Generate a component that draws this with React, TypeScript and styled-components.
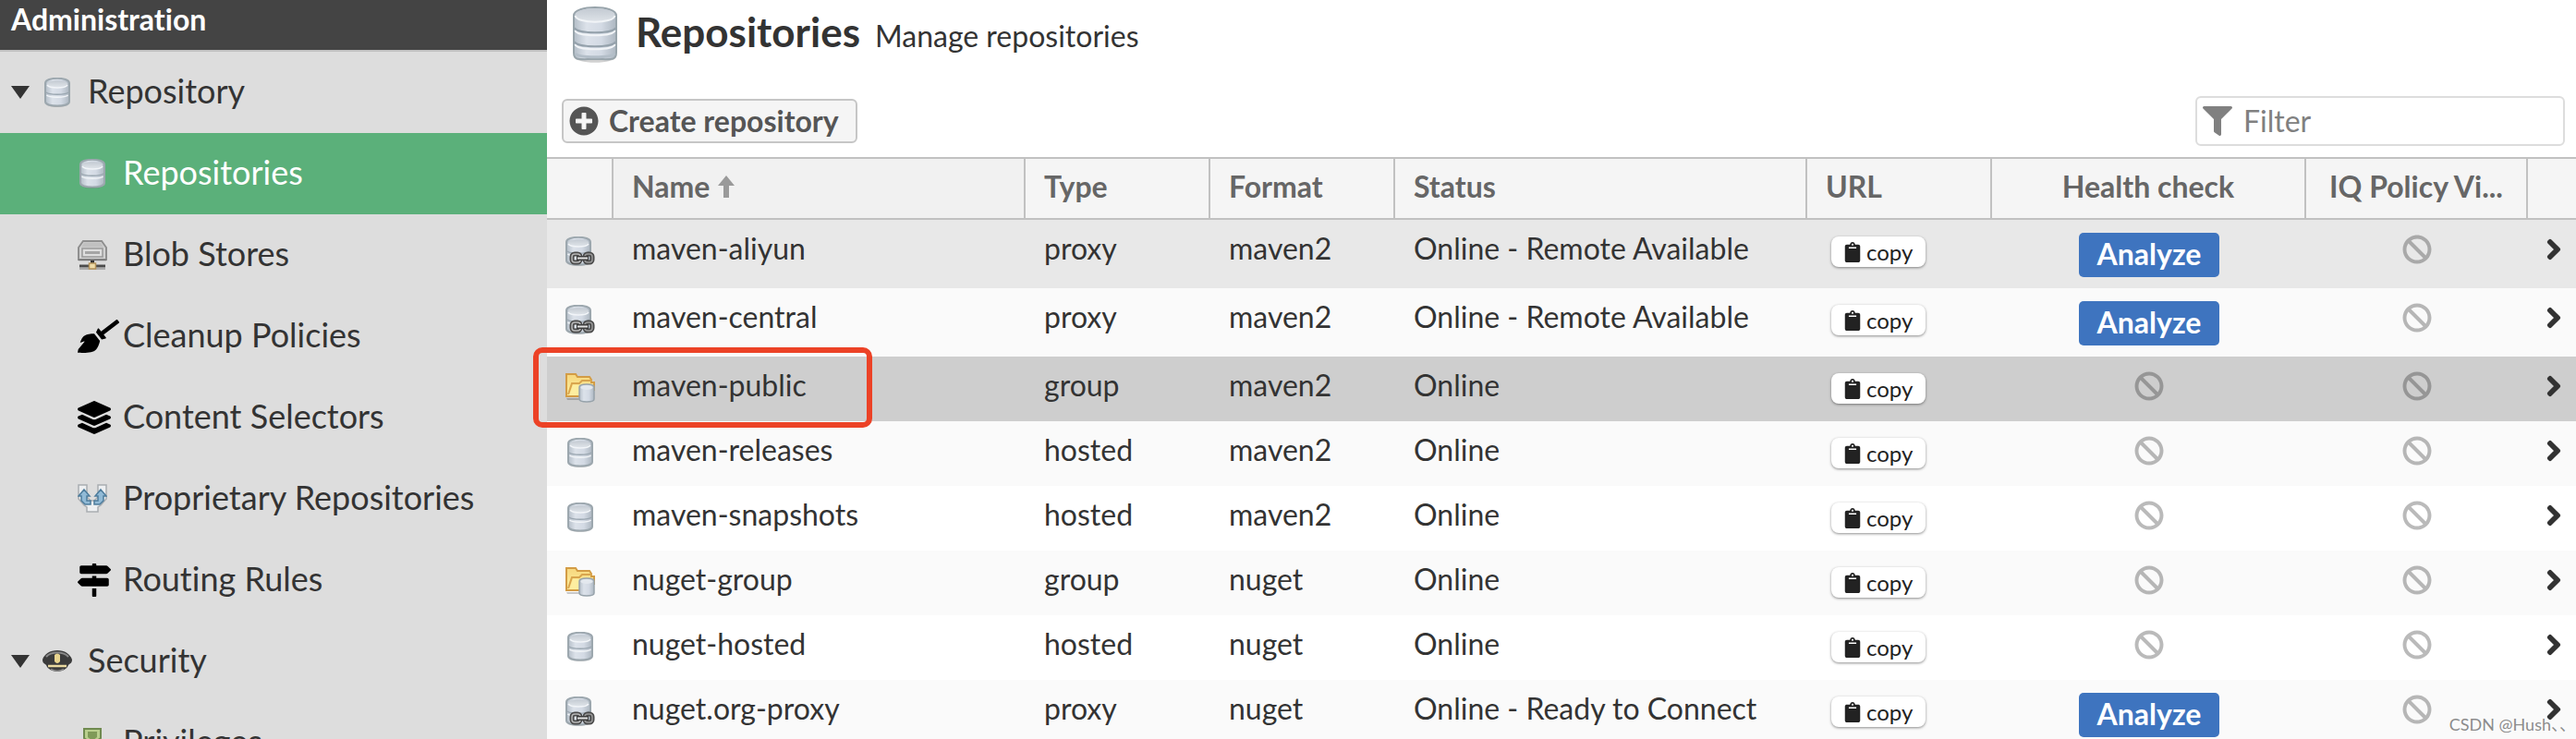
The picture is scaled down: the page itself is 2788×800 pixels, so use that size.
import React from "react";
import styled, { createGlobalStyle } from "styled-components";
import {
  FaBan,
  FaBroom,
  FaChevronRight,
  FaClipboard,
  FaFilter,
  FaLayerGroup,
  FaMapSigns,
  FaPlusCircle,
} from "react-icons/fa";

const GlobalStyle = createGlobalStyle`
  *, *::before, *::after { box-sizing: border-box; }
  body {
    margin: 0;
    background: #fff;
    color: #333;
    font-family: Lato, "Noto Sans CJK SC", sans-serif;
    font-size: 32px;
    font-variant-ligatures: none;
    line-height: 40px;
  }
  button, input { font: inherit; color: inherit; }
  svg { display: block; flex: none; }
`;

const Page = styled.div`
  position: relative;
  display: flex;
  height: 100vh;
  overflow: hidden;
`;

/* Sidebar */

const Sidebar = styled.nav`
  flex: none;
  width: 592px;
  background: #ddd;
`;

const SidebarTitle = styled.h2`
  margin: 0;
  height: 56px;
  padding: 0 12px;
  border-bottom: 2px solid #c1c1c1;
  background: #444;
  color: #fff;
  font-size: 32px;
  font-weight: 700;
  line-height: 42px;
`;

const NavList = styled.ul`
  margin: 0;
  padding: 0;
  list-style: none;
`;

const NavGroup = styled.button`
  display: flex;
  align-items: center;
  gap: 14px;
  width: 100%;
  height: 88px;
  padding: 0 12px;
  border: 0;
  background: none;
  font-size: 36px;
  text-align: left;
`;

const NavLink = styled.a<{ $active?: boolean }>`
  display: flex;
  align-items: center;
  height: 88px;
  padding-left: 84px;
  background: ${(p) => (p.$active ? "#5bb07a" : "transparent")};
  color: ${(p) => (p.$active ? "#fff" : "#333")};
  font-size: 36px;
  text-decoration: none;
`;

const NavCaption = styled.span`
  display: flex;
  align-items: center;
`;

const NavIcon = styled.span`
  flex: none;
  display: flex;
  width: 49px;
  color: #000;
`;

const NavLabel = styled.span`
  padding-bottom: 4px;
  white-space: nowrap;
`;

const BroomIcon = styled(FaBroom)`
  width: 45px;
  height: 36px;
`;

/* Main panel */

const Main = styled.main`
  flex: 1;
  min-width: 0;
`;

const Header = styled.header`
  display: flex;
  align-items: flex-start;
  gap: 12px;
  height: 104px;
  padding: 4px 20px;
`;

const Heading = styled.div`
  display: flex;
  align-items: baseline;
  gap: 16px;
  padding-top: 5px;
`;

const Title = styled.h1`
  margin: 0;
  font-size: 44px;
  font-weight: 700;
  line-height: 50px;
`;

const Subtitle = styled.span`
  font-size: 32px;
`;

const Toolbar = styled.div`
  display: flex;
  align-items: center;
  justify-content: space-between;
  padding: 0 12px 12px 16px;
`;

const CreateButton = styled.button`
  display: flex;
  align-items: center;
  gap: 11px;
  height: 48px;
  padding: 0 18px 0 6px;
  border: 2px solid #c6c6c6;
  border-radius: 6px;
  background: #f5f5f5;
  color: #555;
  font-weight: 700;
`;

const FilterBox = styled.label`
  display: flex;
  align-items: center;
  gap: 12px;
  width: 400px;
  height: 54px;
  padding: 0 6px;
  border: 2px solid #ddd;
  border-radius: 6px;
  color: #808080;
`;

const FilterInput = styled.input`
  flex: 1;
  min-width: 0;
  padding: 0;
  border: 0;
  outline: 0;
  background: none;
  &::placeholder { color: #808080; opacity: 1; }
`;

/* Repository table */

const Table = styled.table`
  width: 100%;
  table-layout: fixed;
  border-collapse: separate;
  border-spacing: 0;
`;

const Col = styled.col<{ $width?: number }>`
  width: ${(p) => (p.$width ? `${p.$width}px` : "auto")};
`;

const HeadCell = styled.th<{ $center?: boolean; $sorted?: boolean }>`
  height: 68px;
  padding: 0 20px 4px;
  border: solid #c1c1c1;
  border-width: 2px 2px 2px 0;
  background: ${(p) => (p.$sorted ? "#f1f1f1" : "#f5f5f5")};
  color: #666;
  font-weight: 700;
  text-align: ${(p) => (p.$center ? "center" : "left")};
  white-space: nowrap;
  &:last-child { border-right: 0; }
`;

const SortLabel = styled.span`
  display: flex;
  align-items: center;
  gap: 8px;
`;

const Row = styled.tr<{ $tone: string }>`
  height: 70px;
  background: ${(p) => p.$tone};
`;

const TextCell = styled.td`
  padding: 11px 20px 0;
  vertical-align: top;
  white-space: nowrap;
`;

const IconCell = styled.td`
  position: relative;
  padding: 18px 20px 0;
  vertical-align: top;
`;

const StatusCell = styled.td`
  padding: 16px 20px 0;
  vertical-align: top;
  color: rgba(0, 0, 0, 0.27);
  svg { margin: 0 auto; }
`;

const ActionCell = styled.td`
  padding: 14px 20px 12px;
  vertical-align: top;
  text-align: center;
`;

const CopyCell = styled.td`
  padding: 18px 26px 0;
  vertical-align: top;
`;

const OpenCell = styled.td`
  padding: 20px 0 0 16px;
  vertical-align: top;
`;

const OpenIcon = styled(FaChevronRight)`
  stroke: currentColor;
  stroke-width: 40px;
`;

const CopyButton = styled.button`
  display: flex;
  align-items: center;
  gap: 4px;
  height: 33px;
  padding: 0 14px 0 12px;
  border: 0;
  border-radius: 8px;
  background: #fff;
  box-shadow: 0 1px 3px rgba(0, 0, 0, 0.45);
  color: #222;
  font-size: 24px;
  line-height: 32px;
`;

const AnalyzeButton = styled.button`
  display: block;
  width: 152px;
  height: 48px;
  margin: 0 auto;
  padding: 0 0 2px;
  border: 0;
  border-radius: 5px;
  background: #3e74bf;
  color: #fff;
  font-weight: 700;
`;

const Highlight = styled.span`
  position: absolute;
  z-index: 1;
  top: -10px;
  left: -15px;
  width: 367px;
  height: 87px;
  border: 6px solid #ec4226;
  border-radius: 10px;
  pointer-events: none;
`;

const Watermark = styled.span`
  position: absolute;
  right: 0;
  bottom: 4px;
  color: #8c8c8c;
  font-size: 18px;
  line-height: 24px;
  text-shadow: 1px 1px 0 #fff;
`;

const Defs = styled.svg`
  position: absolute;
`;

/* Drawings */

function Gradients() {
  return (
    <Defs width="0" height="0" aria-hidden="true">
      <defs>
        <linearGradient id="metal">
          <stop offset="0" stopColor="#b4bec8" />
          <stop offset="0.3" stopColor="#dce2ea" />
          <stop offset="0.65" stopColor="#d3dae4" />
          <stop offset="1" stopColor="#adb7c1" />
        </linearGradient>
        <linearGradient id="lid" x2="0" y2="1">
          <stop offset="0" stopColor="#c3cad2" />
          <stop offset="1" stopColor="#dde2e7" />
        </linearGradient>
        <linearGradient id="folder" x2="0" y2="1">
          <stop offset="0" stopColor="#f7d77e" />
          <stop offset="1" stopColor="#fdf0a0" />
        </linearGradient>
      </defs>
    </Defs>
  );
}

function LargeDatabase() {
  return (
    <svg width="64" height="64" viewBox="0 0 64 64" aria-hidden="true">
      <path d="M9 53v4c0 9 46 9 46 0v-4z" fill="#000" opacity=".18" />
      <path d="M9 13C9 1 55 1 55 13V53c0 9-6 7-23 7S9 62 9 53z" fill="url(#metal)" stroke="#98a4ab" strokeWidth="2" />
      <ellipse cx="32" cy="12" rx="21.500" ry="7" fill="url(#lid)" />
      <path d="M10.500 13c2 9 41 9 43 0M10.500 29c2 7 41 7 43 0M10.500 44c2 7 41 7 43 0" fill="none" stroke="#f1f4f7" strokeWidth="2" />
      <path d="M10 26c2 7 42 7 44 0M10 41c2 7 42 7 44 0" fill="none" stroke="#94a1ab" strokeWidth="2" />
      <path d="M11 54c3 5 39 5 42 0" fill="none" stroke="#b3bec8" strokeWidth="3" />
    </svg>
  );
}

function Cylinder() {
  return (
    <>
      <path d="M4 29c3 4 21 4 24 0z" fill="#000" opacity=".2" />
      <path d="M3 6C3-1 29-1 29 6V26c0 6-26 6-26 0z" fill="url(#metal)" stroke="#9ca7ae" strokeWidth="2" />
      <path d="M5 6.500C5 2 27 2 27 6.500S5 11 5 6.500z" fill="url(#lid)" />
      <path d="M5 8c3 4 19 4 22 0M4.500 19c3 3 20 3 23 0" fill="none" stroke="#f2f5f8" strokeWidth="1.500" />
      <path d="M4 16c3 3 21 3 24 0" fill="none" stroke="#9aa6b0" strokeWidth="1.500" />
    </>
  );
}

function Database() {
  return (
    <svg width="32" height="32" viewBox="0 0 32 32" aria-hidden="true">
      <Cylinder />
    </svg>
  );
}

function ProxyIcon() {
  return (
    <svg width="32" height="32" viewBox="0 0 32 32" aria-hidden="true">
      <g transform="translate(-2 0)">
        <Cylinder />
      </g>
      <g fill="none">
        <rect x="7" y="19" width="9" height="9" rx="3" stroke="#4a4a4a" strokeWidth="5" />
        <rect x="21" y="19" width="8" height="9" rx="3" stroke="#4a4a4a" strokeWidth="5" />
        <rect x="7" y="19" width="9" height="9" rx="3" stroke="#b8b8b8" strokeWidth="1.500" />
        <rect x="21" y="19" width="8" height="9" rx="3" stroke="#999" strokeWidth="1.500" />
        <path d="M12 23.500h13" stroke="#3c3c3c" strokeWidth="5" />
        <path d="M13 23.500h11" stroke="#e2e2e2" strokeWidth="2" />
      </g>
    </svg>
  );
}

function GroupIcon() {
  return (
    <svg width="32" height="32" viewBox="0 0 32 32" aria-hidden="true">
      <path d="M1 27h14v2H2z" fill="#000" opacity=".2" />
      <path d="M1 25V1h10l2 3h13l2 3v3h3v8H16v7z" fill="url(#folder)" stroke="#d39c45" strokeWidth="2" />
      <path d="M3 23l4-12h8l3-3h11" fill="none" stroke="#d9a54d" strokeWidth="2" />
      <path d="M5 23l3-10h7l2-2v12z" fill="#fdeea0" />
      <path d="M15 15c0-4 16-4 16 0v13c0 4-16 4-16 0z" fill="url(#metal)" stroke="#97a3ab" strokeWidth="1.500" />
      <ellipse cx="23" cy="15.500" rx="6.500" ry="2.500" fill="#e3e8ee" />
    </svg>
  );
}

function BlobIcon() {
  return (
    <svg width="32" height="32" viewBox="0 0 32 32" aria-hidden="true">
      <path d="M6 1h20l5 7v13H1V8z" fill="#d2d2d2" stroke="#8f8f8f" strokeWidth="2" />
      <path d="M7 2.500h18l3 5H4z" fill="#c0c0c0" />
      <rect x="5" y="9" width="22" height="9" fill="#dedede" stroke="#999" strokeWidth="1.500" />
      <path d="M8 13.500h16" stroke="#a5a5a5" strokeWidth="3" />
      <path d="M1 21.500h30" stroke="#777" strokeWidth="1.500" />
      <path d="M16 22v4" stroke="#333" strokeWidth="4" />
      <path d="M2 28h28" stroke="#4c4c4c" strokeWidth="3" />
      <path d="M2 31h28" stroke="#aaa" strokeWidth="2" />
      <rect x="12.500" y="25" width="7" height="6" fill="#efdca8" stroke="#b3925b" strokeWidth="1.500" />
    </svg>
  );
}

function MergeIcon() {
  return (
    <svg width="32" height="32" viewBox="0 0 32 32" aria-hidden="true">
      <path d="M1 1h9v13l4 4h4l4-4V1h9v15l-6 7-3 2v5H10v-5l-3-2-6-7z" fill="#eef0f2" stroke="#a9adb1" strokeWidth="1.500" />
      <path d="M7 6l6 7h-3v5h4v4H8l-4-4v-5H1z" fill="#91bad6" stroke="#4d7c9c" strokeWidth="1.500" />
      <path d="M25 6l6 7h-3v5l-4 4h-6v-4h4v-5h-3z" fill="#91bad6" stroke="#4d7c9c" strokeWidth="1.500" />
    </svg>
  );
}

function CapIcon() {
  return (
    <svg width="32" height="32" viewBox="0 0 32 32" aria-hidden="true">
      <path d="M0 14C2 8 8 4 16 4s14 4 16 10c0 4-2 4-4 6-3 9-21 9-24 0-2-2-4-2-4-6z" fill="#3b3b3b" />
      <path d="M4 11c5-6 19-6 24 0" fill="none" stroke="#888" strokeWidth="2" />
      <path d="M6 21h20" stroke="#e9d9a0" strokeWidth="2.500" />
      <path d="M13 9q3-3 6 0v7q-3 4-6 0z" fill="#e8d48e" />
      <path d="M9 24.500c4 2 10 2 14 0" fill="none" stroke="#8c8c8c" strokeWidth="1.500" />
    </svg>
  );
}

function MedalIcon() {
  return (
    <svg width="32" height="32" viewBox="0 0 32 32" aria-hidden="true">
      <path d="M7 1h18v10l-9 7-9-7z" fill="#b9cf8d" stroke="#6f8a4f" strokeWidth="2" />
      <path d="M11 4h10v6l-5 4-5-4z" fill="#7f9a58" />
      <circle cx="16" cy="23" r="7" fill="#f0cf6a" stroke="#b98b30" strokeWidth="2" />
    </svg>
  );
}

function Expander() {
  return (
    <svg width="20" height="14" viewBox="0 0 20 14" aria-hidden="true">
      <path d="M0 0h20L10 14z" fill="#333" />
    </svg>
  );
}

function SortArrow() {
  return (
    <svg width="20" height="24" viewBox="0 0 20 24" aria-hidden="true">
      <path d="M10 0l9 11h-6v13H7V11H1z" fill="#9a9a9a" />
    </svg>
  );
}

/* Data */

const navItems = [
  { label: "Repositories", icon: <Database />, active: true },
  { label: "Blob Stores", icon: <BlobIcon /> },
  { label: "Cleanup Policies", icon: <BroomIcon /> },
  { label: "Content Selectors", icon: <FaLayerGroup size={36} /> },
  { label: "Proprietary Repositories", icon: <MergeIcon /> },
  { label: "Routing Rules", icon: <FaMapSigns size={36} /> },
];

type Kind = "proxy" | "group" | "hosted";

interface Repository {
  name: string;
  kind: Kind;
  format: string;
  status: string;
  tone: string;
  marked?: boolean;
}

const repositories: Repository[] = [
  { name: "maven-aliyun", kind: "proxy", format: "maven2", status: "Online - Remote Available", tone: "#e8e8e8" },
  { name: "maven-central", kind: "proxy", format: "maven2", status: "Online - Remote Available", tone: "#fafafa" },
  { name: "maven-public", kind: "group", format: "maven2", status: "Online", tone: "#cecece", marked: true },
  { name: "maven-releases", kind: "hosted", format: "maven2", status: "Online", tone: "#fafafa" },
  { name: "maven-snapshots", kind: "hosted", format: "maven2", status: "Online", tone: "#fff" },
  { name: "nuget-group", kind: "group", format: "nuget", status: "Online", tone: "#fafafa" },
  { name: "nuget-hosted", kind: "hosted", format: "nuget", status: "Online", tone: "#fff" },
  { name: "nuget.org-proxy", kind: "proxy", format: "nuget", status: "Online - Ready to Connect", tone: "#fafafa" },
];

const kindIcons: Record<Kind, React.ReactElement> = {
  proxy: <ProxyIcon />,
  group: <GroupIcon />,
  hosted: <Database />,
};

function NavSection({ label, icon, children }: { label: string; icon: React.ReactNode; children: React.ReactNode }) {
  return (
    <li>
      <NavGroup type="button" aria-expanded="true">
        <Expander />
        <NavCaption>
          <NavIcon>{icon}</NavIcon>
          <NavLabel>{label}</NavLabel>
        </NavCaption>
      </NavGroup>
      <NavList>{children}</NavList>
    </li>
  );
}

function NavItem({ label, icon, active }: { label: string; icon: React.ReactNode; active?: boolean }) {
  return (
    <li>
      <NavLink href="#" $active={active}>
        <NavIcon>{icon}</NavIcon>
        <NavLabel>{label}</NavLabel>
      </NavLink>
    </li>
  );
}

function RepositoryRow({ repo }: { repo: Repository }) {
  return (
    <Row $tone={repo.tone}>
      <IconCell>
        {kindIcons[repo.kind]}
        {repo.marked && <Highlight />}
      </IconCell>
      <TextCell>{repo.name}</TextCell>
      <TextCell>{repo.kind}</TextCell>
      <TextCell>{repo.format}</TextCell>
      <TextCell>{repo.status}</TextCell>
      <CopyCell>
        <CopyButton type="button">
          <FaClipboard size={22} />
          copy
        </CopyButton>
      </CopyCell>
      {repo.kind === "proxy" ? (
        <ActionCell>
          <AnalyzeButton type="button">Analyze</AnalyzeButton>
        </ActionCell>
      ) : (
        <StatusCell>
          <FaBan size={32} />
        </StatusCell>
      )}
      <StatusCell>
        <FaBan size={32} />
      </StatusCell>
      <OpenCell>
        <OpenIcon size={24} />
      </OpenCell>
    </Row>
  );
}

export default function App() {
  return (
    <Page>
      <GlobalStyle />
      <Gradients />
      <Sidebar>
        <SidebarTitle>Administration</SidebarTitle>
        <NavList>
          <NavSection label="Repository" icon={<Database />}>
            {navItems.map((item) => (
              <NavItem key={item.label} {...item} />
            ))}
          </NavSection>
          <NavSection label="Security" icon={<CapIcon />}>
            <NavItem label="Privileges" icon={<MedalIcon />} />
          </NavSection>
        </NavList>
      </Sidebar>
      <Main>
        <Header>
          <LargeDatabase />
          <Heading>
            <Title>Repositories</Title>
            <Subtitle>Manage repositories</Subtitle>
          </Heading>
        </Header>
        <Toolbar>
          <CreateButton type="button">
            <FaPlusCircle size={32} />
            Create repository
          </CreateButton>
          <FilterBox>
            <FaFilter size={32} />
            <FilterInput type="text" placeholder="Filter" aria-label="Filter" />
          </FilterBox>
        </Toolbar>
        <Table>
          <colgroup>
            <Col $width={72} />
            <Col />
            <Col $width={200} />
            <Col $width={200} />
            <Col />
            <Col $width={200} />
            <Col $width={340} />
            <Col $width={240} />
            <Col $width={52} />
          </colgroup>
          <thead>
            <tr>
              <HeadCell />
              <HeadCell $sorted aria-sort="ascending">
                <SortLabel>
                  Name
                  <SortArrow />
                </SortLabel>
              </HeadCell>
              <HeadCell>Type</HeadCell>
              <HeadCell>Format</HeadCell>
              <HeadCell>Status</HeadCell>
              <HeadCell>URL</HeadCell>
              <HeadCell $center>Health check</HeadCell>
              <HeadCell $center>IQ Policy Vi...</HeadCell>
              <HeadCell />
            </tr>
          </thead>
          <tbody>
            {repositories.map((repo) => (
              <RepositoryRow key={repo.name} repo={repo} />
            ))}
          </tbody>
        </Table>
      </Main>
      <Watermark>CSDN @Hush、、</Watermark>
    </Page>
  );
}
